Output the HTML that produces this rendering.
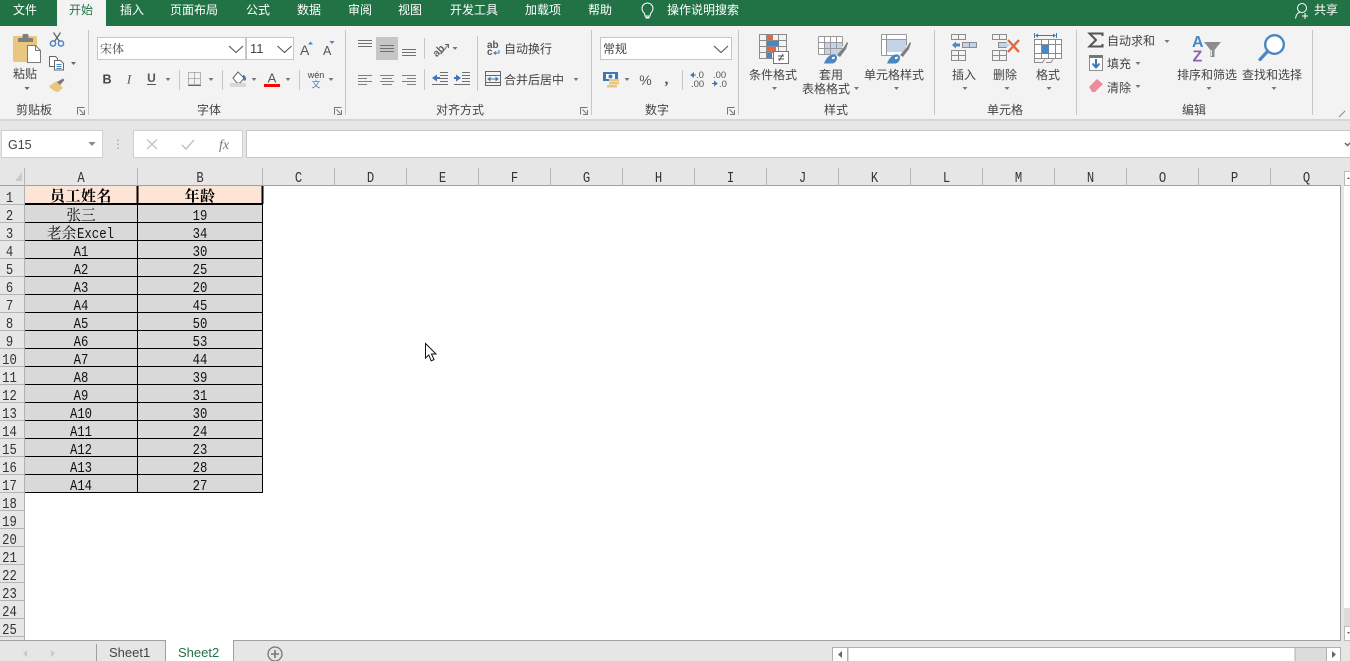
<!DOCTYPE html>
<html lang="zh">
<head>
<meta charset="utf-8">
<title>Excel</title>
<style>
html,body{margin:0;padding:0;width:1350px;height:661px;overflow:hidden;background:#fff}
svg{display:block;position:absolute;left:0;top:0}
text{white-space:pre}
.s{font-family:"Liberation Sans","Noto Sans CJK SC",sans-serif;font-size:12px;fill:#444}
.m{text-anchor:middle}
.t{fill:#fff}
.c{font-family:"Noto Serif CJK SC",serif;font-size:14.67px;fill:#111;text-anchor:middle}
.b{font-family:"Noto Serif CJK SC",serif;font-size:15px;font-weight:700;fill:#000;text-anchor:middle;letter-spacing:.5px}
.d{font-family:"Liberation Mono",monospace;font-size:14.67px;fill:#111;text-anchor:middle}
.h{font-family:"Liberation Mono",monospace;font-size:14.67px;fill:#333;text-anchor:middle}
.r{font-family:"Liberation Mono",monospace;font-size:14.67px;fill:#333;text-anchor:middle}
</style>
</head>
<body>
<svg width="1350" height="661" viewBox="0 0 1350 661" xmlns="http://www.w3.org/2000/svg" shape-rendering="auto">
<!-- backgrounds -->
<rect x="0" y="0" width="1350" height="26" fill="#217346"/>
<rect x="0" y="26" width="1350" height="93" fill="#f3f3f3"/>
<rect x="0" y="119" width="1350" height="2" fill="#d6d6d6"/>
<rect x="0" y="121" width="1350" height="65" fill="#e6e6e6"/>
<rect x="57" y="0" width="49" height="26" fill="#f3f3f3"/>

<!-- tabs -->
<g class="s">
<text class="s t m" x="25" y="14">文件</text>
<text class="s m" x="81" y="14" style="fill:#217346">开始</text>
<text class="s t m" x="132" y="14">插入</text>
<text class="s t m" x="194" y="14">页面布局</text>
<text class="s t m" x="258" y="14">公式</text>
<text class="s t m" x="309" y="14">数据</text>
<text class="s t m" x="360" y="14">审阅</text>
<text class="s t m" x="410" y="14">视图</text>
<text class="s t m" x="474" y="14">开发工具</text>
<text class="s t m" x="543" y="14">加载项</text>
<text class="s t m" x="600" y="14">帮助</text>
<text class="s t m" x="703" y="14">操作说明搜索</text>
<text class="s t m" x="1326" y="14">共享</text>
</g>
<!-- bulb -->
<path d="M644.500 13.500c-1.500-1.500-2.500-3-2.500-5 0-3 2.400-5.500 5.500-5.500s5.500 2.500 5.500 5.500c0 2-1 3.500-2.500 5l-.5 2.500h-5z" fill="none" stroke="#fff"/>
<path d="M645.500 18h4M646 16v1.500h3V16" fill="none" stroke="#fff"/>
<!-- person -->
<circle cx="1302" cy="8" r="4.500" fill="none" stroke="#fff"/>
<path d="M1295.500 18.500c.5-4 2.500-6 5-6.500" fill="none" stroke="#fff"/>
<path d="M1305 13v6M1302 16h6" stroke="#fff"/>

<!-- separators -->
<g stroke="#c6c6c6">
<path d="M88.500 30v85M345.500 30v85M591.500 30v85M738.500 30v85M934.500 30v85M1076.500 30v85M1312.500 30v85"/>
<path d="M179.500 70v20M222.500 70v20M299.500 70v20M424.500 38v21M424.500 69v21M477.500 36v55M682.500 70v20"/>
</g>

<!-- clipboard group -->
<rect x="13" y="36" width="24" height="26" rx="1.500" fill="#eac77f"/>
<rect x="18" y="38" width="15" height="4" fill="#7f7f7f"/>
<rect x="22.500" y="34" width="6" height="5" rx="1.500" fill="#7f7f7f"/>
<path d="M27.500 45.500h8l5 5v12h-13z" fill="#fff" stroke="#7a7a7a"/>
<path d="M35.500 45.500v5h5" fill="none" stroke="#7a7a7a"/>
<circle cx="53" cy="43.500" r="2.600" fill="none" stroke="#4a86c5" stroke-width="1.500"/>
<circle cx="61" cy="43.500" r="2.600" fill="none" stroke="#4a86c5" stroke-width="1.500"/>
<path d="M54.500 41.500L60.500 32.500M59.500 41.500L53.500 32.500" stroke="#666" stroke-width="1.300" fill="none"/>
<path d="M49.500 56.500h6l2 2v8h-8z" fill="#fff" stroke="#666"/>
<path d="M54.500 60.500h6l3 3v6.500h-9z" fill="#fff" stroke="#666"/>
<path d="M56.500 64.500h5M56.500 66.500h5M56.500 68.500h5" stroke="#4a86c5"/>
<path d="M71 62h5l-2.500 3z" fill="#666"/>
<path d="M49 86l8-5 6 7-5 4c-3 0-7-3-9-6z" fill="#eac77f"/>
<path d="M57 82l3 3 4.500-5-1.500-1.500z" fill="#7a7a7a"/>
<text class="s m" x="25" y="78">粘贴</text>
<path d="M24.500 87h5l-2.500 3z" fill="#666"/>
<text class="s m" x="34" y="114">剪贴板</text>
<path d="M77.500 114.500v-7h7M84.500 110v4.500H80M79.500 109.500l4 4" fill="none" stroke="#777"/>

<!-- font group -->
<rect x="97.500" y="37.500" width="148" height="22" fill="#fff" stroke="#c6c6c6"/>
<rect x="246.500" y="37.500" width="47" height="22" fill="#fff" stroke="#c6c6c6"/>
<text x="100" y="53" style="font-family:'Noto Serif CJK SC',serif;font-size:12px;fill:#444">宋体</text>
<path d="M229 46l7 6.500 7-6.500M277.500 46l7 6.500 7-6.500" fill="none" stroke="#555" stroke-width="1.100"/>
<text class="s" x="250" y="53" style="font-size:13px">11</text>
<text class="s" x="300" y="55" style="font-size:14px;fill:#555">A</text>
<path d="M308 44.500h5l-2.500-3z" fill="#4a86c5"/>
<text class="s" x="323" y="55" style="font-size:12.500px;fill:#555">A</text>
<path d="M329.500 41h5l-2.500 3z" fill="#4a86c5"/>
<text class="s m" x="107" y="83.500" style="font-weight:700;font-size:12.500px;fill:#444">B</text>
<text class="m" x="129" y="83.500" style="font-family:'Liberation Serif',serif;font-style:italic;font-size:13px;fill:#555">I</text>
<text class="s m" x="151.500" y="82" style="font-weight:700;font-size:12px;fill:#555">U</text>
<path d="M147 84.500h9" stroke="#555"/>
<path d="M165.500 78h5l-2.500 3zM208.500 78h5l-2.500 3zM251.500 78h5l-2.500 3zM285.500 78h5l-2.500 3zM328.500 78h5l-2.500 3z" fill="#777"/>
<path d="M188.500 72.500h12v12h-12zM188.500 78.500h12M194.500 72.500v12" fill="none" stroke="#777" stroke-dasharray="1 1"/>
<path d="M188 85.500h13" stroke="#666"/>
<path d="M233 78l5-6 6 6-4 5h-3z" fill="#fff" stroke="#666"/>
<path d="M243 75c2 0 3 2 3 5l-2 1-1-3z" fill="#3d78b5"/>
<rect x="230" y="83" width="16" height="4" fill="#d8d8d8"/>
<text class="s m" x="272" y="82.500" style="font-size:13px;fill:#555">A</text>
<rect x="264" y="84" width="16" height="3" fill="#f00"/>
<text class="m" x="316" y="78" style="font-family:'Liberation Sans',sans-serif;font-size:9px;fill:#444">wén</text>
<text class="m" x="316" y="87.500" style="font-family:'Noto Sans CJK SC',sans-serif;font-size:9px;fill:#3d78b5">文</text>

<!-- alignment -->
<rect x="376" y="37" width="22" height="23" fill="#c6c6c6"/>
<g stroke="#707070" fill="none">
<path d="M358 40.500h14M358 43.500h14M358 46.500h14"/>
<path d="M380 45.500h14M380 48.500h14M380 51.500h14"/>
<path d="M402 49.500h14M402 52.500h14M402 55.500h14"/>
<path d="M358 75.500h14M358 78.500h9M358 81.500h14M358 84.500h9" stroke="#808080"/>
<path d="M380 75.500h14M382 78.500h10M380 81.500h14M382 84.500h10" stroke="#808080"/>
<path d="M402 75.500h14M407 78.500h9M402 81.500h14M407 84.500h9" stroke="#808080"/>
<path d="M440 72.500h8M440 75.500h8M440 78.500h8M440 81.500h8M432 84.500h16"/>
<path d="M462 72.500h8M462 75.500h8M462 78.500h8M462 81.500h8M454 84.500h16"/>
</g>
<path d="M432 78l5-3.500v2.500h3v2h-3v2.500z" fill="#3d78b5"/>
<path d="M461 78l-5-3.500v2.500h-2v2h2v2.500z" fill="#3d78b5"/>
<text x="431" y="54" transform="rotate(-45 438 49)" style="font-family:'Liberation Sans',sans-serif;font-size:10.500px;font-weight:700;fill:#666">ab</text>
<path d="M441 54l7-9M445 44.500h3.500v3.500" fill="none" stroke="#666"/>
<path d="M452.500 47h5l-2.500 3z" fill="#777"/>
<text x="487" y="48" style="font-family:'Liberation Sans',sans-serif;font-size:10px;font-weight:700;fill:#555">ab</text>
<text x="487" y="55" style="font-family:'Liberation Sans',sans-serif;font-size:10px;font-weight:700;fill:#555">c</text>
<path d="M499 50v3h-5M496 51.500l-2 1.500 2 1.500" fill="none" stroke="#3d78b5"/>
<text class="s" x="504" y="53">自动换行</text>
<rect x="485.500" y="71.500" width="15" height="14" fill="none" stroke="#666"/>
<path d="M485.500 75.500h15M485.500 82.500h15" stroke="#666" fill="none"/>
<path d="M488 79h10M488 79l2-1.500v3zM498 79l-2-1.500v3z" stroke="#3d78b5" fill="#3d78b5"/>
<text class="s" x="504" y="84">合并后居中</text>
<path d="M573.500 78h5l-2.500 3z" fill="#777"/>

<!-- number -->
<rect x="600.500" y="37.500" width="131" height="22" fill="#fff" stroke="#c6c6c6"/>
<text x="603" y="53" class="s">常规</text>
<path d="M714 46l7 6.500 7-6.500" fill="none" stroke="#555" stroke-width="1.100"/>
<rect x="603" y="72" width="15" height="9" fill="#3d78b5"/>
<rect x="606" y="74" width="9" height="5" fill="#fff"/>
<circle cx="610.500" cy="76.500" r="2" fill="#3d78b5"/>
<path d="M609 79h10v2.500h-10zM609 82h10v2.500h-10zM607 85h10v2.500h-10z" fill="#eac77f"/>
<path d="M624.500 78h5l-2.500 3z" fill="#777"/>
<text class="s m" x="645.500" y="85" style="font-size:14px;fill:#555">%</text>
<text class="m" x="666.500" y="84" style="font-family:'Liberation Serif',serif;font-size:16px;font-weight:700;fill:#555">,</text>
<text x="696" y="78" style="font-family:'Liberation Sans',sans-serif;font-size:9.500px;fill:#555">.0</text>
<text x="691" y="87" style="font-family:'Liberation Sans',sans-serif;font-size:9.500px;fill:#555">.00</text>
<path d="M696 75h-5M691 75l2.500-2v4z" stroke="#3d78b5" fill="#3d78b5"/>
<text x="713" y="78" style="font-family:'Liberation Sans',sans-serif;font-size:9.500px;fill:#555">.00</text>
<text x="719" y="87" style="font-family:'Liberation Sans',sans-serif;font-size:9.500px;fill:#555">.0</text>
<path d="M712 83.500h5M717 83.500l-2.500-2v4z" stroke="#3d78b5" fill="#3d78b5"/>

<!-- labels -->
<text class="s m" x="209" y="114">字体</text>
<text class="s m" x="460" y="114">对齐方式</text>
<text class="s m" x="657" y="114">数字</text>
<text class="s m" x="836" y="114">样式</text>
<text class="s m" x="1005" y="114">单元格</text>
<text class="s m" x="1194" y="114">编辑</text>
<path d="M334.500 114.500v-7h7M341.500 110v4.500H337M336.500 109.500l4 4" fill="none" stroke="#777"/>
<path d="M580.500 114.500v-7h7M587.500 110v4.500H583M582.500 109.500l4 4" fill="none" stroke="#777"/>
<path d="M727.500 114.500v-7h7M734.500 110v4.500H730M729.500 109.500l4 4" fill="none" stroke="#777"/>

<!-- styles -->
<path d="M759.500 34.500h27v24h-27zM759.500 40.500h27M759.500 46.500h27M759.500 52.500h27M766.500 34.500v24M778.500 34.500v24" fill="none" stroke="#8c8c8c"/>
<rect x="767" y="35" width="6" height="5" fill="#dd6b47"/>
<rect x="767" y="41" width="12" height="5" fill="#4a86c0"/>
<rect x="767" y="47" width="9" height="5" fill="#dd6b47"/>
<rect x="767" y="53" width="5" height="5" fill="#4a86c0"/>
<rect x="773.500" y="51.500" width="15" height="12" fill="#fff" stroke="#777"/>
<path d="M778 56h6M778 59h6M783 54l-4 7" stroke="#555" fill="none"/>
<text class="s m" x="773" y="79">条件格式</text>
<path d="M772 87h5l-2.500 3z" fill="#777"/>

<rect x="818.500" y="36.500" width="24" height="18" fill="#fff"/>
<rect x="825" y="42" width="17" height="13" fill="#c3d4e8"/>
<path d="M818.500 36.500h24M818.500 42.500h24M818.500 48.500h24M818.500 54.500h12M818.500 36.500v18M824.500 36.500v18M830.500 36.500v18M836.500 36.500v12M842.500 36.500v10" fill="none" stroke="#999"/>
<path d="M837 55l7-8 3-5 1 1-2 6-6 8z" fill="#7f7f7f"/>
<path d="M824 63.500c1-3 4-8 8-9 3-1 5 1 5 3 0 3-2 6-5 6z" fill="#4a86c0"/>
<path d="M832 57.500c1-1 3-1 3 0s-2 2-3 1.500z" fill="#fff"/>
<text class="s m" x="831" y="79">套用</text>
<text class="s m" x="826" y="93">表格格式</text>
<path d="M854 87h5l-2.500 3z" fill="#777"/>

<rect x="881.500" y="34.500" width="25" height="21" fill="#fff"/>
<rect x="886" y="39" width="20" height="13" fill="#c3d4e8"/>
<path d="M881.500 34.500h25M881.500 39.500h25M881.500 55.500h14M881.500 34.500v21M886.500 34.500v21M906.500 34.500v11" fill="none" stroke="#999"/>
<path d="M900 55l7-8 3-5 1 1-2 6-6 8z" fill="#7f7f7f"/>
<path d="M887 63.500c1-3 4-8 8-9 3-1 5 1 5 3 0 3-2 6-5 6z" fill="#4a86c0"/>
<path d="M895 57.500c1-1 3-1 3 0s-2 2-3 1.500z" fill="#fff"/>
<text class="s m" x="894" y="79">单元格样式</text>
<path d="M894 87h5l-2.500 3z" fill="#777"/>

<!-- cells -->
<path d="M951.500 34.500h14v5h-14zM958.500 34.500v5M951.500 50.500h14v10h-14zM951.500 55.500h14M958.500 50.500v10" fill="none" stroke="#8c8c8c"/>
<rect x="962.500" y="42.500" width="14" height="5" fill="#c3d4e8" stroke="#8c8c8c"/>
<path d="M969.500 42.500v5" stroke="#8c8c8c"/>
<path d="M952 45l4-3.500v2h4v3h-4v2z" fill="#4a86c0"/>
<text class="s m" x="964" y="79">插入</text>
<path d="M962.500 87h5l-2.500 3z" fill="#777"/>

<path d="M992.500 34.500h14v5h-14zM999.500 34.500v5M992.500 50.500h14v10h-14zM992.500 55.500h14M999.500 50.500v10" fill="none" stroke="#8c8c8c"/>
<rect x="998.500" y="42.500" width="8" height="5" fill="#c3d4e8" stroke="#8c8c8c"/>
<path d="M1006 42l4 3-4 3z" fill="#c3d4e8"/>
<path d="M1008 40l11 12M1019 40l-11 12" stroke="#dd6b47" stroke-width="2.400" fill="none"/>
<text class="s m" x="1005" y="79">删除</text>
<path d="M1004.500 87h5l-2.500 3z" fill="#777"/>

<path d="M1034.500 33v5M1056.500 33v5M1036 35.500h19" stroke="#3d78b5" fill="none"/>
<path d="M1035 35.500l3-2v4zM1056 35.500l-3-2v4z" fill="#3d78b5"/>
<rect x="1034.500" y="39.500" width="27" height="19" fill="#fff" stroke="#8c8c8c"/>
<path d="M1034.500 44.500h27M1034.500 53.500h27M1041.500 39.500v19M1048.500 39.500v19M1055.500 39.500v19" stroke="#8c8c8c" fill="none"/>
<rect x="1042" y="45" width="7" height="9" fill="#4a86c0"/>
<path d="M1034.500 58.500v4h8l2-3M1046 62.500h5l2-3" fill="none" stroke="#8c8c8c"/>
<text class="s m" x="1048" y="79">格式</text>
<path d="M1046.500 87h5l-2.500 3z" fill="#777"/>

<!-- editing -->
<path d="M1102.500 36v-2.500h-13l6.500 6.500-6.500 6.500h13V44" fill="none" stroke="#555" stroke-width="2"/>
<text class="s" x="1107" y="45">自动求和</text>
<path d="M1164.500 40h5l-2.500 3z" fill="#777"/>
<rect x="1089.500" y="55.500" width="13" height="15" fill="#fff" stroke="#8c8c8c"/>
<rect x="1089" y="55" width="14" height="3" fill="#777"/>
<path d="M1096 59v8M1092.500 63.500l3.500 4 3.500-4" fill="none" stroke="#3d78b5" stroke-width="2"/>
<text class="s" x="1107" y="68">填充</text>
<path d="M1135.500 62h5l-2.500 3z" fill="#777"/>
<path d="M1089 87l8-8 6 5-8 8h-3z" fill="#ee8d9a"/>
<text class="s" x="1107" y="92">清除</text>
<path d="M1135.500 85h5l-2.500 3z" fill="#777"/>

<text x="1192" y="47" style="font-family:'Liberation Sans',sans-serif;font-size:16px;font-weight:700;fill:#4a86c0">A</text>
<text x="1192.500" y="61.500" style="font-family:'Liberation Sans',sans-serif;font-size:16px;font-weight:700;fill:#8e62b3">Z</text>
<path d="M1204 42h17l-6.500 8v7h-4v-7z" fill="#8c8c8c"/>
<path d="M1211.500 50v6" stroke="#e8e8e8"/>
<text class="s m" x="1207" y="79">排序和筛选</text>
<path d="M1206.500 87h5l-2.500 3z" fill="#777"/>

<circle cx="1274.500" cy="44.500" r="9.300" fill="#fff" stroke="#4a86c0" stroke-width="2.400"/>
<path d="M1267.500 51.500l-7.500 8" stroke="#4a86c0" stroke-width="3.200" stroke-linecap="round"/>
<text class="s m" x="1272" y="79">查找和选择</text>
<path d="M1271.500 87h5l-2.500 3z" fill="#777"/>
<path d="M1339 117l6-6" stroke="#888"/>

<!-- formula bar -->
<rect x="1.500" y="130.500" width="101" height="27" fill="#fff" stroke="#cfcfcf"/>
<text x="8" y="149" class="s" style="font-size:12.500px">G15</text>
<path d="M88.500 142h7l-3.500 4z" fill="#888"/>
<path d="M118 139.500v1.500M118 143.500v1.500M118 147.500v1.500" stroke="#aaa" stroke-width="1.500"/>
<rect x="133.500" y="130.500" width="109" height="27" fill="#fff" stroke="#cfcfcf"/>
<path d="M147 139.500l10 9.500M157 139.500l-10 9.500" stroke="#c2c2c2" stroke-width="1.300" fill="none"/>
<path d="M182 145l4 4 8-9" stroke="#c2c2c2" stroke-width="1.500" fill="none"/>
<text class="m" x="224" y="149" style="font-family:'Liberation Serif',serif;font-style:italic;font-size:14px;fill:#777">fx</text>
<rect x="246.500" y="130.500" width="1105" height="27" fill="#fff" stroke="#c6c6c6"/>
<path d="M1345 143l2.500 2.500 2.500-2.500" fill="none" stroke="#666" stroke-width="1.500"/>

<!-- column header -->
<path d="M0 185.500H1341" stroke="#9f9f9f"/>
<path d="M22 172v9h-7z" fill="#c8c8c8"/>
<g stroke="#b4b4b4">
<path d="M24.500 168v18M137.500 168v18M262.500 168v18M334.500 168v18M406.500 168v18M478.500 168v18M550.500 168v18M622.500 168v18M694.500 168v18M766.500 168v18M838.500 168v18M910.500 168v18M982.500 168v18M1054.500 168v18M1126.500 168v18M1198.500 168v18M1270.500 168v18"/>
</g>
<text class="h" x="81" y="182" textLength="7.300" lengthAdjust="spacingAndGlyphs">A</text><text class="h" x="200" y="182" textLength="7.300" lengthAdjust="spacingAndGlyphs">B</text><text class="h" x="298.500" y="182" textLength="7.300" lengthAdjust="spacingAndGlyphs">C</text><text class="h" x="370.500" y="182" textLength="7.300" lengthAdjust="spacingAndGlyphs">D</text><text class="h" x="442.500" y="182" textLength="7.300" lengthAdjust="spacingAndGlyphs">E</text><text class="h" x="514.500" y="182" textLength="7.300" lengthAdjust="spacingAndGlyphs">F</text><text class="h" x="586.500" y="182" textLength="7.300" lengthAdjust="spacingAndGlyphs">G</text><text class="h" x="658.500" y="182" textLength="7.300" lengthAdjust="spacingAndGlyphs">H</text><text class="h" x="730.500" y="182" textLength="7.300" lengthAdjust="spacingAndGlyphs">I</text><text class="h" x="802.500" y="182" textLength="7.300" lengthAdjust="spacingAndGlyphs">J</text><text class="h" x="874.500" y="182" textLength="7.300" lengthAdjust="spacingAndGlyphs">K</text><text class="h" x="946.500" y="182" textLength="7.300" lengthAdjust="spacingAndGlyphs">L</text><text class="h" x="1018.500" y="182" textLength="7.300" lengthAdjust="spacingAndGlyphs">M</text><text class="h" x="1090.500" y="182" textLength="7.300" lengthAdjust="spacingAndGlyphs">N</text><text class="h" x="1162.500" y="182" textLength="7.300" lengthAdjust="spacingAndGlyphs">O</text><text class="h" x="1234.500" y="182" textLength="7.300" lengthAdjust="spacingAndGlyphs">P</text><text class="h" x="1306.500" y="182" textLength="7.300" lengthAdjust="spacingAndGlyphs">Q</text>

<!-- row header -->
<rect x="0" y="186" width="24" height="454" fill="#e6e6e6"/>
<path d="M24.500 186v454" stroke="#b0b0b0"/>
<path d="M0 204.500h24M0 222.500h24M0 240.500h24M0 258.500h24M0 276.500h24M0 294.500h24M0 312.500h24M0 330.500h24M0 348.500h24M0 366.500h24M0 384.500h24M0 402.500h24M0 420.500h24M0 438.500h24M0 456.500h24M0 474.500h24M0 492.500h24M0 510.500h24M0 528.500h24M0 546.500h24M0 564.500h24M0 582.500h24M0 600.500h24M0 618.500h24M0 636.500h24" stroke="#b4b4b4"/>
<text class="r" x="9.500" y="202" textLength="7.300" lengthAdjust="spacingAndGlyphs">1</text>
<text class="r" x="9.500" y="220" textLength="7.300" lengthAdjust="spacingAndGlyphs">2</text>
<text class="r" x="9.500" y="238" textLength="7.300" lengthAdjust="spacingAndGlyphs">3</text>
<text class="r" x="9.500" y="256" textLength="7.300" lengthAdjust="spacingAndGlyphs">4</text>
<text class="r" x="9.500" y="274" textLength="7.300" lengthAdjust="spacingAndGlyphs">5</text>
<text class="r" x="9.500" y="292" textLength="7.300" lengthAdjust="spacingAndGlyphs">6</text>
<text class="r" x="9.500" y="310" textLength="7.300" lengthAdjust="spacingAndGlyphs">7</text>
<text class="r" x="9.500" y="328" textLength="7.300" lengthAdjust="spacingAndGlyphs">8</text>
<text class="r" x="9.500" y="346" textLength="7.300" lengthAdjust="spacingAndGlyphs">9</text>
<text class="r" x="9.500" y="364" textLength="14.700" lengthAdjust="spacingAndGlyphs">10</text>
<text class="r" x="9.500" y="382" textLength="14.700" lengthAdjust="spacingAndGlyphs">11</text>
<text class="r" x="9.500" y="400" textLength="14.700" lengthAdjust="spacingAndGlyphs">12</text>
<text class="r" x="9.500" y="418" textLength="14.700" lengthAdjust="spacingAndGlyphs">13</text>
<text class="r" x="9.500" y="436" textLength="14.700" lengthAdjust="spacingAndGlyphs">14</text>
<text class="r" x="9.500" y="454" textLength="14.700" lengthAdjust="spacingAndGlyphs">15</text>
<text class="r" x="9.500" y="472" textLength="14.700" lengthAdjust="spacingAndGlyphs">16</text>
<text class="r" x="9.500" y="490" textLength="14.700" lengthAdjust="spacingAndGlyphs">17</text>
<text class="r" x="9.500" y="508" textLength="14.700" lengthAdjust="spacingAndGlyphs">18</text>
<text class="r" x="9.500" y="526" textLength="14.700" lengthAdjust="spacingAndGlyphs">19</text>
<text class="r" x="9.500" y="544" textLength="14.700" lengthAdjust="spacingAndGlyphs">20</text>
<text class="r" x="9.500" y="562" textLength="14.700" lengthAdjust="spacingAndGlyphs">21</text>
<text class="r" x="9.500" y="580" textLength="14.700" lengthAdjust="spacingAndGlyphs">22</text>
<text class="r" x="9.500" y="598" textLength="14.700" lengthAdjust="spacingAndGlyphs">23</text>
<text class="r" x="9.500" y="616" textLength="14.700" lengthAdjust="spacingAndGlyphs">24</text>
<text class="r" x="9.500" y="634" textLength="14.700" lengthAdjust="spacingAndGlyphs">25</text>

<!-- table -->
<rect x="25" y="186" width="238" height="18" fill="#fce4d6"/>
<rect x="25" y="204" width="238" height="288" fill="#d9d9d9"/>
<path d="M25 222.500h238M25 240.500h238M25 258.500h238M25 276.500h238M25 294.500h238M25 312.500h238M25 330.500h238M25 348.500h238M25 366.500h238M25 384.500h238M25 402.500h238M25 420.500h238M25 438.500h238M25 456.500h238M25 474.500h238M25 492.500h238" stroke="#000"/>
<path d="M25 204h238" stroke="#000" stroke-width="2"/>
<path d="M137.500 204v289M262.500 204v289" stroke="#000"/>
<path d="M137.500 186v18M262.500 186v18" stroke="#000" stroke-width="2"/>
<text class="b" x="81" y="201">员工姓名</text><text class="b" x="200" y="201">年龄</text>
<text class="c" x="81" y="220">张三</text><text class="d" x="200" y="220" textLength="14.700" lengthAdjust="spacingAndGlyphs">19</text>
<text x="47" y="238" style="font-family:'Noto Serif CJK SC',serif;font-size:14.670px;fill:#111">老余</text><text x="77" y="238" textLength="37" lengthAdjust="spacingAndGlyphs" style="font-family:'Liberation Mono',monospace;font-size:14.670px;fill:#111">Excel</text><text class="d" x="200" y="238" textLength="14.700" lengthAdjust="spacingAndGlyphs">34</text>
<text class="d" x="81" y="256" textLength="14.700" lengthAdjust="spacingAndGlyphs">A1</text><text class="d" x="200" y="256" textLength="14.700" lengthAdjust="spacingAndGlyphs">30</text>
<text class="d" x="81" y="274" textLength="14.700" lengthAdjust="spacingAndGlyphs">A2</text><text class="d" x="200" y="274" textLength="14.700" lengthAdjust="spacingAndGlyphs">25</text>
<text class="d" x="81" y="292" textLength="14.700" lengthAdjust="spacingAndGlyphs">A3</text><text class="d" x="200" y="292" textLength="14.700" lengthAdjust="spacingAndGlyphs">20</text>
<text class="d" x="81" y="310" textLength="14.700" lengthAdjust="spacingAndGlyphs">A4</text><text class="d" x="200" y="310" textLength="14.700" lengthAdjust="spacingAndGlyphs">45</text>
<text class="d" x="81" y="328" textLength="14.700" lengthAdjust="spacingAndGlyphs">A5</text><text class="d" x="200" y="328" textLength="14.700" lengthAdjust="spacingAndGlyphs">50</text>
<text class="d" x="81" y="346" textLength="14.700" lengthAdjust="spacingAndGlyphs">A6</text><text class="d" x="200" y="346" textLength="14.700" lengthAdjust="spacingAndGlyphs">53</text>
<text class="d" x="81" y="364" textLength="14.700" lengthAdjust="spacingAndGlyphs">A7</text><text class="d" x="200" y="364" textLength="14.700" lengthAdjust="spacingAndGlyphs">44</text>
<text class="d" x="81" y="382" textLength="14.700" lengthAdjust="spacingAndGlyphs">A8</text><text class="d" x="200" y="382" textLength="14.700" lengthAdjust="spacingAndGlyphs">39</text>
<text class="d" x="81" y="400" textLength="14.700" lengthAdjust="spacingAndGlyphs">A9</text><text class="d" x="200" y="400" textLength="14.700" lengthAdjust="spacingAndGlyphs">31</text>
<text class="d" x="81" y="418" textLength="22" lengthAdjust="spacingAndGlyphs">A10</text><text class="d" x="200" y="418" textLength="14.700" lengthAdjust="spacingAndGlyphs">30</text>
<text class="d" x="81" y="436" textLength="22" lengthAdjust="spacingAndGlyphs">A11</text><text class="d" x="200" y="436" textLength="14.700" lengthAdjust="spacingAndGlyphs">24</text>
<text class="d" x="81" y="454" textLength="22" lengthAdjust="spacingAndGlyphs">A12</text><text class="d" x="200" y="454" textLength="14.700" lengthAdjust="spacingAndGlyphs">23</text>
<text class="d" x="81" y="472" textLength="22" lengthAdjust="spacingAndGlyphs">A13</text><text class="d" x="200" y="472" textLength="14.700" lengthAdjust="spacingAndGlyphs">28</text>
<text class="d" x="81" y="490" textLength="22" lengthAdjust="spacingAndGlyphs">A14</text><text class="d" x="200" y="490" textLength="14.700" lengthAdjust="spacingAndGlyphs">27</text>

<!-- cursor -->
<path d="M425.500 343.500V358l3.300-3 2.400 5.800 2.800-1.200-2.500-5.600h4.500z" fill="#fff" stroke="#111"/>

<!-- right side -->
<rect x="1341" y="158" width="9" height="503" fill="#e6e6e6"/>
<path d="M1340.500 186v454" stroke="#9f9f9f"/>
<rect x="1344.500" y="171.500" width="8" height="14" fill="#fff" stroke="#bbb"/>
<rect x="1344" y="186" width="6" height="422" fill="#fff"/>
<rect x="1344" y="608" width="6" height="18" fill="#dcdcdc"/>
<rect x="1344.500" y="626.500" width="8" height="14" fill="#fff" stroke="#bbb"/>
<path d="M1347 179h3l-1.500-2zM1347 632h3l-1.500 2z" fill="#666"/>

<!-- sheet bar -->
<rect x="0" y="640" width="1341" height="21" fill="#e6e6e6"/>
<path d="M0 640.500h1341" stroke="#a0a0a0"/>
<path d="M27 650v7l-4-3.500zM51 650v7l4-3.500z" fill="#c9c9c9"/>
<path d="M96.500 644v17" stroke="#a0a0a0"/>
<rect x="166" y="641" width="67" height="20" fill="#fff"/>
<path d="M165.500 640v21M233.500 640v21" stroke="#a0a0a0"/>
<path d="M166 640.500h67" stroke="#fff"/>
<text x="109" y="657" style="font-family:'Liberation Sans',sans-serif;font-size:13px;fill:#444">Sheet1</text>
<text x="178" y="657" style="font-family:'Liberation Sans',sans-serif;font-size:13px;fill:#217346">Sheet2</text>
<circle cx="275" cy="654" r="7" fill="none" stroke="#777" stroke-width="1.300"/>
<path d="M275 650v8M271 654h8" stroke="#777" stroke-width="1.600"/>

<!-- h scroll -->
<rect x="832.500" y="647.500" width="15" height="14" fill="#fff" stroke="#b0b0b0"/>
<path d="M842 651v7l-4-3.500z" fill="#666"/>
<rect x="848" y="647.500" width="447" height="14" fill="#fff" stroke="#b0b0b0"/>
<rect x="1295" y="647.500" width="31.500" height="14" fill="#dcdcdc" stroke="#b0b0b0"/>
<rect x="1326.500" y="647.500" width="14" height="14" fill="#fff" stroke="#b0b0b0"/>
<path d="M1332 651v7l4-3.500z" fill="#666"/>
</svg>
</body>
</html>
